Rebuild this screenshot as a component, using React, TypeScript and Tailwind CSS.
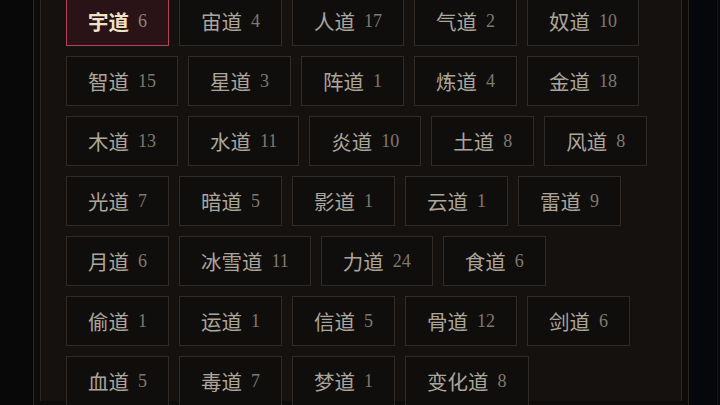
import React from "react";

type Dao = { name: string; count: number };

const daos: Dao[] = [
  { name: "宇道", count: 6 },
  { name: "宙道", count: 4 },
  { name: "人道", count: 17 },
  { name: "气道", count: 2 },
  { name: "奴道", count: 10 },
  { name: "智道", count: 15 },
  { name: "星道", count: 3 },
  { name: "阵道", count: 1 },
  { name: "炼道", count: 4 },
  { name: "金道", count: 18 },
  { name: "木道", count: 13 },
  { name: "水道", count: 11 },
  { name: "炎道", count: 10 },
  { name: "土道", count: 8 },
  { name: "风道", count: 8 },
  { name: "光道", count: 7 },
  { name: "暗道", count: 5 },
  { name: "影道", count: 1 },
  { name: "云道", count: 1 },
  { name: "雷道", count: 9 },
  { name: "月道", count: 6 },
  { name: "冰雪道", count: 11 },
  { name: "力道", count: 24 },
  { name: "食道", count: 6 },
  { name: "偷道", count: 1 },
  { name: "运道", count: 1 },
  { name: "信道", count: 5 },
  { name: "骨道", count: 12 },
  { name: "剑道", count: 6 },
  { name: "血道", count: 5 },
  { name: "毒道", count: 7 },
  { name: "梦道", count: 1 },
  { name: "变化道", count: 8 },
];

function DaoChip({ dao, active }: { dao: Dao; active: boolean }) {
  return (
    <button
      className={
        active
          ? "flex items-center gap-[9px] h-[50px] px-[21px] border border-[#b8405a] bg-[#2a1317]"
          : "flex items-center gap-[9px] h-[50px] px-[21px] border border-[#302b26] bg-[#100e0c]"
      }
    >
      <span
        className={
          active
            ? "text-[20.5px] font-bold text-[#f2e2c4] [font-family:'Noto_Sans_CJK_SC',sans-serif]"
            : "text-[20.5px] text-[#aba59b] [font-family:'Noto_Sans_CJK_SC',sans-serif]"
        }
      >
        {dao.name}
      </span>
      <span
        className={
          active
            ? "text-[18px] text-[#8c8279] [font-family:'Liberation_Serif',serif]"
            : "text-[18px] text-[#7f7970] [font-family:'Liberation_Serif',serif]"
        }
      >
        {dao.count}
      </span>
    </button>
  );
}

export default function App() {
  return (
    <div className="w-[720px] h-[405px] overflow-hidden bg-[#080808] flex">
      <div className="w-[33px] shrink-0" />
      <div className="w-[656px] shrink-0 h-full border-x border-[#2a2622] bg-[#0e0c0b] px-[6px]">
        <div className="h-full border-x border-[#2c2824] bg-[#14110e] px-[25px]">
          <div className="-mt-[4px] flex flex-wrap gap-[10px]">
            {daos.map((d, i) => (
              <DaoChip key={d.name} dao={d} active={i === 0} />
            ))}
          </div>
        </div>
      </div>
      <div className="flex-1 h-full bg-[#06070a] flex justify-end">
        <div className="w-[3px] h-full border-l border-[#15161a]" />
      </div>
    </div>
  );
}
